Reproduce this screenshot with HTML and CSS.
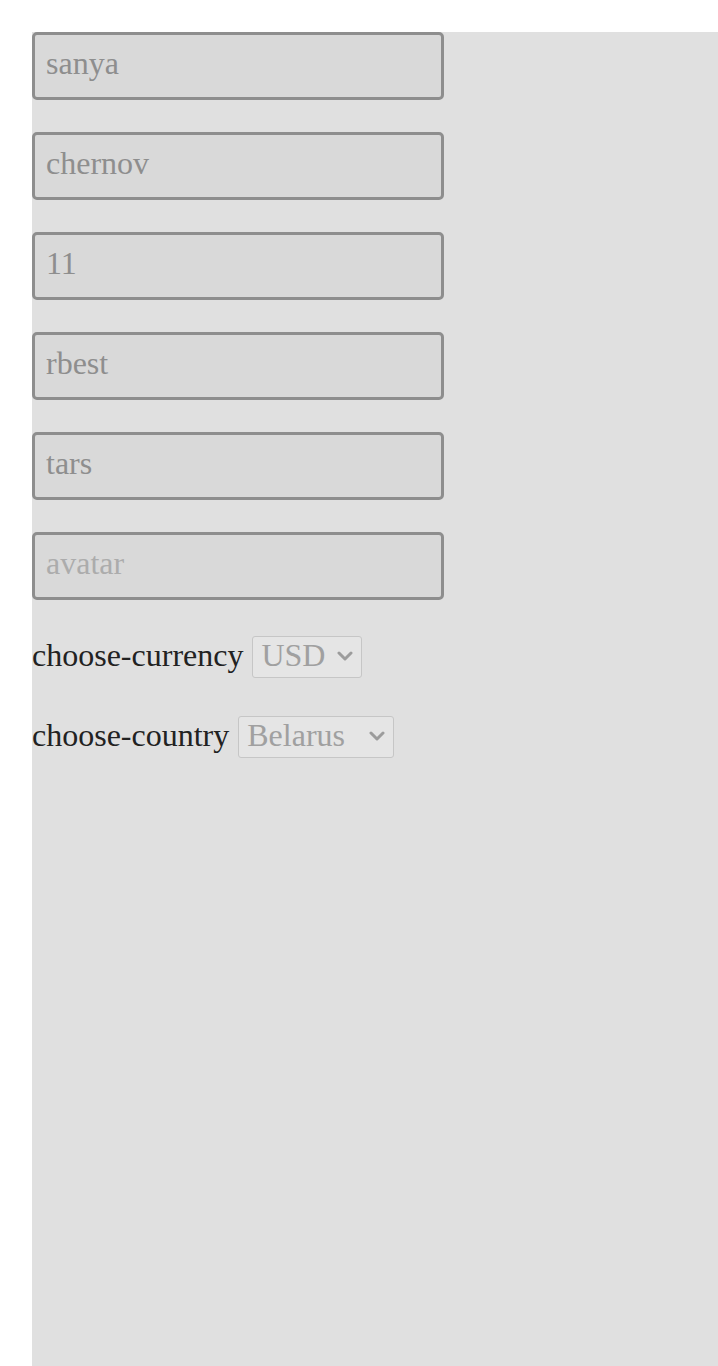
FILE: index.html
```html
<!DOCTYPE html>
<html>
<head>
<meta charset="utf-8">
<link rel="stylesheet" href="styles.css">
</head>
<body>
<div class="page">
  <form class="form">
    <input class="field" type="text" value="sanya">
    <input class="field" type="text" value="chernov">
    <input class="field" type="text" value="11">
    <input class="field" type="text" value="rbest">
    <input class="field" type="text" value="tars">
    <input class="field" type="text" placeholder="avatar">
    <div class="row row-first">
      <label class="label">choose-currency</label>
      <span class="select-wrap select-currency">
        <select class="choice" disabled>
          <option>USD</option>
        </select>
        <svg class="chevron" width="16" height="10" viewBox="0 0 16 10"><path d="M2 2 L8 8 L14 2" fill="none" stroke="#9c9c9c" stroke-width="3" stroke-linecap="round" stroke-linejoin="round"/></svg>
      </span>
    </div>
    <div class="row">
      <label class="label">choose-country</label>
      <span class="select-wrap select-country">
        <select class="choice" disabled>
          <option>Belarus</option>
        </select>
        <svg class="chevron" width="16" height="10" viewBox="0 0 16 10"><path d="M2 2 L8 8 L14 2" fill="none" stroke="#9c9c9c" stroke-width="3" stroke-linecap="round" stroke-linejoin="round"/></svg>
      </span>
    </div>
  </form>
</div>
</body>
</html>
```

FILE: styles.css
```css
html, body {
  margin: 0;
  padding: 0;
  background: #ffffff;
}

.page {
  padding: 32px 0 0 32px;
  min-height: 1366px;
  box-sizing: border-box;
  display: flex;
}

.form {
  flex: 1;
  background: #e0e0e0;
  display: flex;
  flex-direction: column;
  align-items: flex-start;
  font-family: "Liberation Serif", "Times New Roman", serif;
  font-size: 32px;
  color: #222222;
}

.field {
  box-sizing: border-box;
  width: 412px;
  height: 68px;
  margin: 0 0 32px 0;
  padding: 0 11px 6px 11px;
  border: 3px solid #8e8e8e;
  border-radius: 5px;
  background: #d9d9d9;
  color: #8e8e8e;
  font-family: inherit;
  font-size: 32px;
  outline: none;
}

.field::placeholder {
  color: #acacac;
}

.row {
  display: flex;
  align-items: baseline;
  gap: 9px;
  line-height: normal;
}

.row-first {
  margin-top: 4px;
  margin-bottom: 38px;
}

.label {
  font-family: inherit;
}

.select-wrap {
  position: relative;
  display: inline-flex;
}

.select-currency {
  width: 110px;
}

.select-country {
  width: 156px;
}

.choice {
  appearance: none;
  -webkit-appearance: none;
  box-sizing: border-box;
  width: 100%;
  height: 42px;
  margin: 0;
  padding: 0 0 4px 8px;
  border: 1px solid #c6c6c6;
  border-radius: 3px;
  background: #e5e5e5;
  color: #a0a0a0;
  font-family: inherit;
  font-size: 32px;
  opacity: 1;
}

.chevron {
  position: absolute;
  right: 9px;
  top: 15px;
  pointer-events: none;
}
```
